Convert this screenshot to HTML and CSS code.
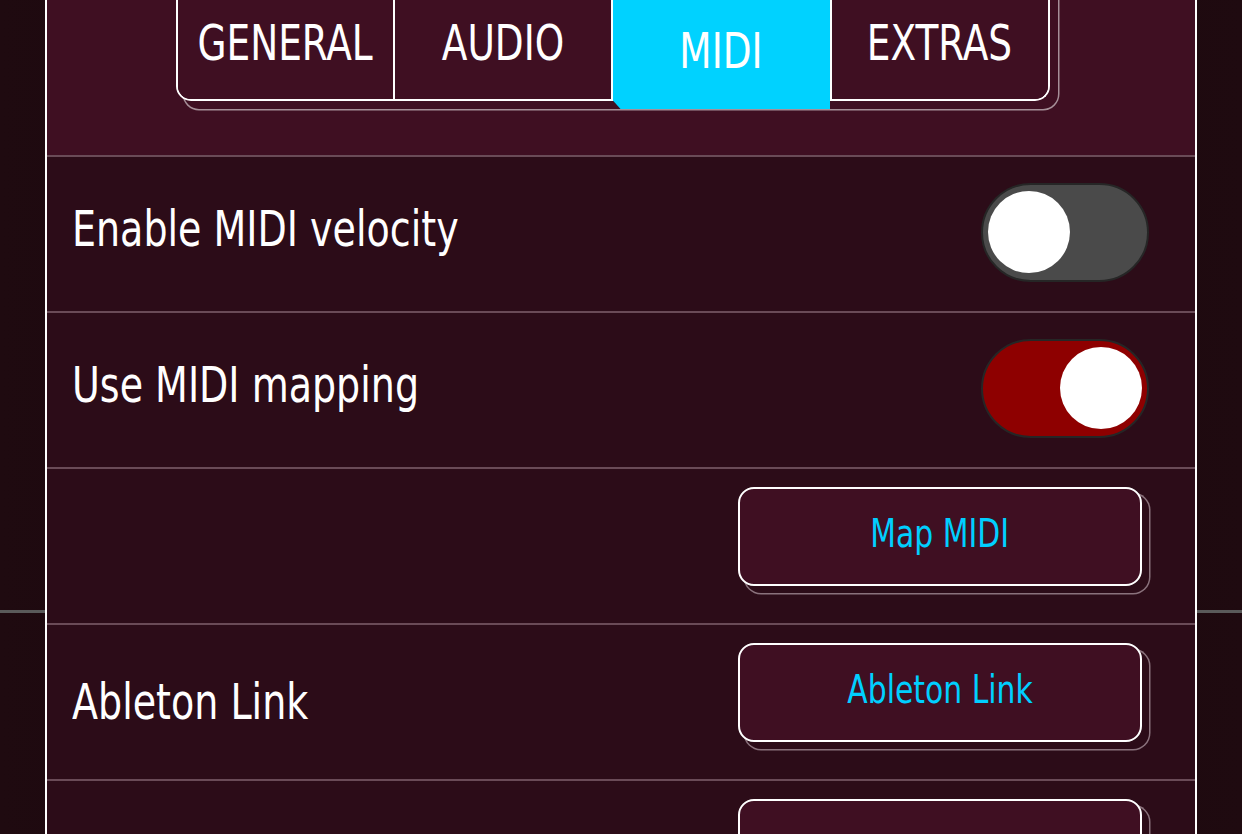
FILE: index.html
```html
<!DOCTYPE html>
<html lang="en">
<head>
<meta charset="utf-8">
<title>Settings - MIDI</title>
<link rel="stylesheet" href="styles.css">
</head>
<body>
<div class="screen">
  <main class="panel">
    <header class="panel-head">
      <nav class="tabs">
        <button class="tab tab-first"><span class="narrow">GENERAL</span></button>
        <button class="tab tab-mid"><span class="narrow">AUDIO</span></button>
        <button class="tab tab-active"><span class="narrow">MIDI</span></button>
        <button class="tab tab-last"><span class="narrow">EXTRAS</span></button>
      </nav>
    </header>
    <div class="row">
      <span class="label">Enable MIDI velocity</span>
      <span class="switch"><span class="knob"></span></span>
    </div>
    <div class="row">
      <span class="label">Use MIDI mapping</span>
      <span class="switch switch-on"><span class="knob"></span></span>
    </div>
    <div class="row row-btn">
      <span class="label"></span>
      <button class="btn"><span class="narrow">Map MIDI</span></button>
    </div>
    <div class="row row-btn">
      <span class="label">Ableton Link</span>
      <button class="btn"><span class="narrow">Ableton Link</span></button>
    </div>
    <div class="row row-btn">
      <span class="label"></span>
      <button class="btn"></button>
    </div>
  </main>
</div>
</body>
</html>
```
FILE: styles.css
```css
html, body {
  margin: 0;
  padding: 0;
  height: 100%;
  overflow: hidden;
}

body {
  font-family: "DejaVu Sans Condensed", "DejaVu Sans", sans-serif;
  background: #1c080d;
  color: #fff;
}

.screen {
  height: 834px;
  overflow: hidden;
  display: flex;
  justify-content: center;
  background:
    linear-gradient(to bottom, transparent 610px, #5a5a5a 610px, #5a5a5a 613px, transparent 613px),
    linear-gradient(to right, #1f0a10, #170609 50%, #1f0a10);
}

.panel {
  width: 1148px;
  border-left: 2px solid #fff;
  border-right: 2px solid #fff;
  background: #2c0c18;
  display: flex;
  flex-direction: column;
  flex: 0 0 auto;
}

.panel-head {
  height: 155px;
  flex: 0 0 155px;
  background: #3f0f22;
  display: flex;
  justify-content: center;
  align-items: flex-start;
  padding-right: 17px;
}

.tabs {
  display: flex;
  box-sizing: border-box;
  width: 874px;
  height: 114px;
  margin-top: -13px;
  border: 2px solid #fff;
  border-top: 0;
  border-radius: 0 0 15px 15px;
  background: #3f0f22;
  box-shadow: 8px 8px 0 0 #3f0f22, 8px 8px 0 1.5px #a68f98;
}

/* emulate the narrow face of the original UI font */
.narrow {
  display: inline-block;
  white-space: nowrap;
  transform: scaleX(0.85);
  transform-origin: center center;
}

.tab {
  flex: 0 0 217.5px;
  box-sizing: border-box;
  display: flex;
  align-items: center;
  justify-content: center;
  padding: 0;
  border: 0;
  background: #3f0f22;
  color: #fff;
  font-family: inherit;
  font-size: 49px;
  line-height: 1;
}

.tab-first {
  border-right: 2px solid #fff;
  border-bottom-left-radius: 13px;
}

.tab-mid {
  border-right: 2px solid #fff;
}

.tab-active {
  background: #00d2ff;
  margin-bottom: -10px;
  padding-top: 6px;
  clip-path: polygon(0 0, 100% 0, 100% 100%, 8px 100%, 0 calc(100% - 9px));
}

.tab-last {
  border-left: 2px solid #fff;
  border-bottom-right-radius: 13px;
}

.row {
  height: 156px;
  flex: 0 0 156px;
  box-sizing: border-box;
  border-top: 2px solid #6a4b57;
  display: flex;
  align-items: center;
  justify-content: space-between;
  padding: 0 46px 4px 25px;
}

.label {
  display: inline-block;
  white-space: nowrap;
  font-size: 50px;
  line-height: 1;
  color: #fff;
  margin-bottom: 6px;
  transform: scaleX(0.845);
  transform-origin: left center;
}

.row-btn {
  align-items: flex-start;
  padding-top: 18px;
  padding-bottom: 0;
}

.row-btn .label {
  align-self: center;
  margin-top: -18px;
  margin-bottom: 0;
}

.switch {
  box-sizing: border-box;
  width: 168px;
  height: 99px;
  border-radius: 50px;
  border: 2px solid #262626;
  background: #4a4a4a;
  display: flex;
  align-items: center;
  justify-content: flex-start;
  padding: 0 5px;
}

.switch-on {
  background: #8e0000;
  justify-content: flex-end;
}

.knob {
  width: 82px;
  height: 82px;
  border-radius: 50%;
  background: #fff;
}

.btn {
  box-sizing: border-box;
  width: 404px;
  height: 99px;
  margin-right: 7px;
  border: 2px solid #fff;
  border-radius: 16px;
  background: #3f0f22;
  color: #00cfff;
  font-family: inherit;
  font-size: 39px;
  line-height: 1;
  padding: 0 0 6px;
  box-shadow: 7px 7px 0 0 #2c0c18, 7px 7px 0 1.5px #8a727c;
}
```
